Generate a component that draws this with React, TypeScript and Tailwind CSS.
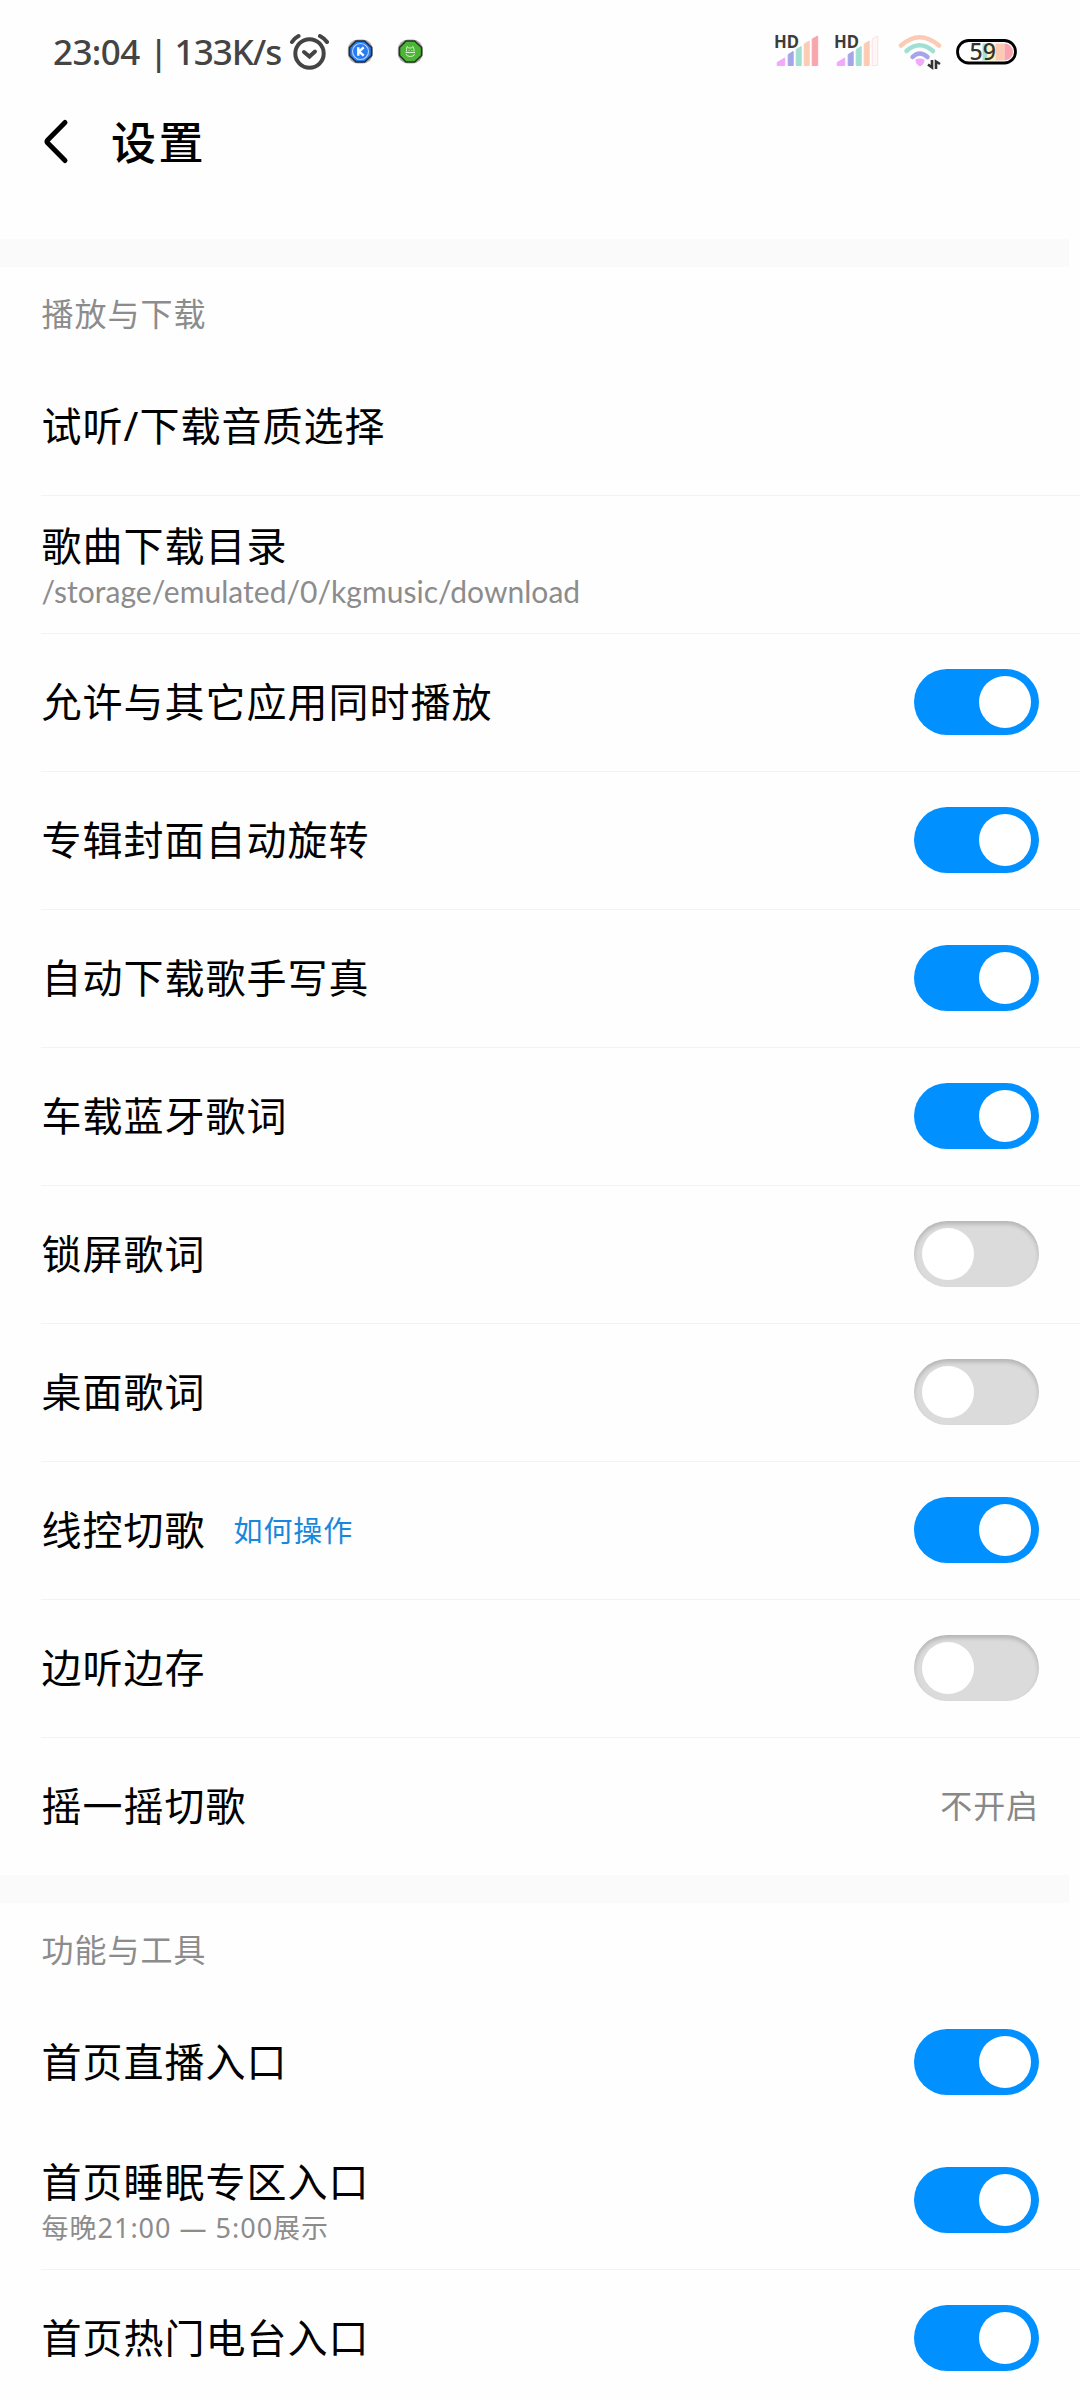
import React from "react";

const CJK = "font-['Noto_Sans','Noto_Sans_CJK_SC',sans-serif]";

function Toggle({ on }: { on: boolean }) {
  return on ? (
    <span role="switch" aria-checked="true" className="flex h-[66px] w-[125px] items-center justify-end rounded-full bg-[#0090ff] pr-2">
      <span className="size-[52px] rounded-full bg-white" />
    </span>
  ) : (
    <span role="switch" aria-checked="false" className="flex h-[66px] w-[125px] items-center rounded-full bg-[#dbdbdb] pl-2 shadow-[inset_0_3px_4px_rgba(0,0,0,0.18)]">
      <span className="size-[52px] rounded-full bg-white" />
    </span>
  );
}

type Item = {
  title: string;
  sub?: React.ReactNode;
  link?: string;
  value?: string;
  on?: boolean;
  line?: boolean;
};

const playback: Item[] = [
  { title: "试听/下载音质选择", line: true },
  {
    title: "歌曲下载目录",
    sub: <span className="font-['Lato',sans-serif] text-[30px] tracking-[0.03px]">/storage/emulated/0/kgmusic/download</span>,
    line: true,
  },
  { title: "允许与其它应用同时播放", on: true, line: true },
  { title: "专辑封面自动旋转", on: true, line: true },
  { title: "自动下载歌手写真", on: true, line: true },
  { title: "车载蓝牙歌词", on: true, line: true },
  { title: "锁屏歌词", on: false, line: true },
  { title: "桌面歌词", on: false, line: true },
  { title: "线控切歌", link: "如何操作", on: true, line: true },
  { title: "边听边存", on: false, line: true },
  { title: "摇一摇切歌", value: "不开启" },
];

const tools: Item[] = [
  { title: "首页直播入口", on: true },
  {
    title: "首页睡眠专区入口",
    sub: <span className="text-[27px] tracking-[1px]">每晚21:00 — 5:00展示</span>,
    on: true,
    line: true,
  },
  { title: "首页热门电台入口", on: true },
];

function Row({ title, sub, link, value, on, line }: Item) {
  return (
    <div className={line ? "ml-[41px] flex h-[138px] shrink-0 border-b border-[#f3f3f3]" : "ml-[41px] flex h-[138px] shrink-0 border-b border-transparent"}>
      <div className="flex min-w-0 flex-1 items-center justify-between pb-px pl-[0.5px] pr-[41px]">
        <div className={sub ? "flex flex-col pt-1" : "flex flex-col"}>
          <div className="flex items-center">
            <span className="text-[40px] leading-[50px] tracking-[1px] text-black">{title}</span>
            {link && <span className="ml-[28px] pt-px text-[29px] leading-[50px] tracking-[0.9px] text-[#1888dc]">{link}</span>}
          </div>
          {sub && <div className="flex h-[41px] items-center leading-[41px] text-[#8c8c8c]">{sub}</div>}
        </div>
        {value && <span className="text-[32px] tracking-[0.9px] text-[#888888]">{value}</span>}
        {on !== undefined && <Toggle on={on} />}
      </div>
    </div>
  );
}

function Section({ name, items }: { name: string; items: Item[] }) {
  return (
    <section className="-mb-px">
      <div className="h-[28px] w-[1069px] bg-[#fafafa]" />
      <h2 className="flex h-[91px] items-center pl-[41.5px] pt-[2px] text-[32px] tracking-[1px] text-[#8c8c8c]">{name}</h2>
      {items.map((it) => (
        <Row key={it.title} {...it} />
      ))}
    </section>
  );
}

function Signal({ full }: { full: boolean }) {
  return (
    <svg width="46" height="52" viewBox="0 -8 46 52">
      <g transform="translate(.7 0)" strokeLinejoin="round">
        <path d="M1.500 31.500V28.500L9 24V31.500Z" fill="#f2a8fb" stroke="#f2a8fb" />
        <path d="M12.500 31.500V20.500L17.500 17.500V31.500Z" fill="#a5a5e9" stroke="#a5a5e9" />
        <path d="M20.500 31.500V15.500L25.500 12.500V31.500Z" fill="#a0e0d2" stroke="#a0e0d2" />
        <path d="M28.500 31.500V10L33.500 7V31.500Z" fill="#fdcbb4" stroke="#fdcbb4" />
        <path d="M36.500 31.500V5L42 2V31.500Z" fill={full ? "#f8a5ae" : "#fef7f8"} stroke={full ? "#f8a5ae" : "#fde0e4"} />
      </g>
      <text x="-1" y="14" fontFamily="Noto Sans, sans-serif" fontWeight="700" fontSize="17" fill="#3c3c3c" textLength="25" lengthAdjust="spacingAndGlyphs">HD</text>
    </svg>
  );
}

function StatusBar() {
  return (
    <div className="flex h-[104px] items-center justify-between pl-[53px] pr-[63px]">
      <div className="flex items-center">
        <div className="flex w-[236px] items-center whitespace-nowrap text-[35px] font-medium text-[#444444]">
          <span className="tracking-[-0.6px]">23:04</span>
          <span className="ml-[7px] w-[24px] text-center">|</span>
          <span className="ml-[4px] tracking-[-1px]">133K/s</span>
        </div>
        <svg width="40" height="38" viewBox="0 0 40 38" fill="none" stroke="#444" strokeWidth="4" strokeLinecap="round">
          <circle cx="20.500" cy="20.500" r="14.200" />
          <path d="M3 9Q5.500 5 9.500 3M31 3Q35 5 38 9" strokeWidth="4" />
          <path d="M15 19L20.500 23.500L26 18.500" strokeWidth="4" />
        </svg>
        <svg className="ml-[18px]" width="28" height="26" viewBox="0 0 28 26">
          <rect x=".8" y=".5" width="25" height="24" rx="10" fill="#aaa" />
          <path d="M9 2H17.600L24.600 8.500V16.500L17.600 23H9L2.500 16.500V8.500Z" fill="#2a7df0" stroke="#1b2b42" strokeWidth="1.600" strokeLinejoin="round" />
          <circle cx="13.500" cy="12.500" r="8" fill="none" stroke="#b9d6ff" strokeWidth="1.100" />
          <path d="M11.300 8.300V16.700M16.700 8.300L12 12.500L16.700 16.700" stroke="#fff" strokeWidth="2.400" fill="none" />
        </svg>
        <svg className="ml-[22px]" width="28" height="26" viewBox="0 0 28 26">
          <rect x=".8" y=".5" width="25" height="24" rx="10" fill="#aaa" />
          <path d="M9 2H17.600L24.600 8.500V16.500L17.600 23H9L2.500 16.500V8.500Z" fill="#4db535" stroke="#22381e" strokeWidth="1.600" strokeLinejoin="round" />
          <path d="M9.500 12.500V10.500L10 7.500L11.800 9H14.200L16 7.500L17 10.500V12.500M8.500 13.500H18M9 15Q9.500 17.500 13.300 17.500T17.600 15M12 11.200V12M14.800 11.200V12" stroke="#d5f3cc" strokeWidth="1" fill="none" />
        </svg>
      </div>
      <div className="flex items-center">
        <Signal full />
        <span className="w-[14px]" />
        <Signal full={false} />
        <svg className="ml-[16px]" width="46" height="38" viewBox="0 0 46 38" fill="none" strokeLinecap="round">
          <path d="M4 12.500Q22.500 -4 42 12.500" stroke="#fdcbb4" strokeWidth="4.500" />
          <path d="M9.500 18Q22.500 6.500 36 18" stroke="#a0e0d2" strokeWidth="4.500" />
          <path d="M15.500 24Q22.500 17 30.500 24" stroke="#a5a5e9" strokeWidth="4.500" />
          <path d="M18.500 26.500Q22.500 24.500 27.500 26.500Q27.500 31.500 23 33.500Q18.500 31.500 18.500 26.500Z" fill="#f2a8fb" />
          <path d="M35 27V34.500L31 31.500M39 36V28.500L43 31" stroke="#333" strokeWidth="2.600" strokeLinecap="butt" />
        </svg>
        <svg className="ml-[12px]" width="62" height="44" viewBox="-1.500 -9 62 44">
          <path d="M26 4.500H31V21.500H26Z" fill="#a0e0d2" />
          <path d="M31 4.500H39V21.500H31Z" fill="#fdf3bb" />
          <path d="M39 4.500H48V21.500H39Z" fill="#fdcbb4" />
          <path d="M48 4.500A8.500 8.500 0 0 1 48 21.500Z" fill="#f8a5ae" />
          <rect x="1" y="1.500" width="58" height="22.500" rx="11.250" fill="none" stroke="#000" strokeWidth="2.800" />
          <text x="13" y="20.800" fontFamily="Noto Sans, sans-serif" fontSize="23" fontWeight="500" fill="#333">59</text>
        </svg>
      </div>
    </div>
  );
}

export default function App() {
  return (
    <div className={`h-[2400px] w-[1080px] overflow-hidden bg-[#fefefe] ${CJK}`}>
      <StatusBar />
      <header className="flex h-[135px] items-start">
        <svg className="ml-[40px] mt-[13px]" width="32" height="50" viewBox="0 0 32 50" fill="none" stroke="#000" strokeWidth="5" strokeLinecap="round" strokeLinejoin="round">
          <path d="M25 5.500L7.500 23.200Q6.500 24.500 7.500 25.800L25 43.500" />
        </svg>
        <h1 className="ml-[39px] mt-[9px] text-[45px] font-medium leading-[60px] tracking-[2.5px] text-black">设置</h1>
      </header>
      <Section name="播放与下载" items={playback} />
      <Section name="功能与工具" items={tools} />
    </div>
  );
}
